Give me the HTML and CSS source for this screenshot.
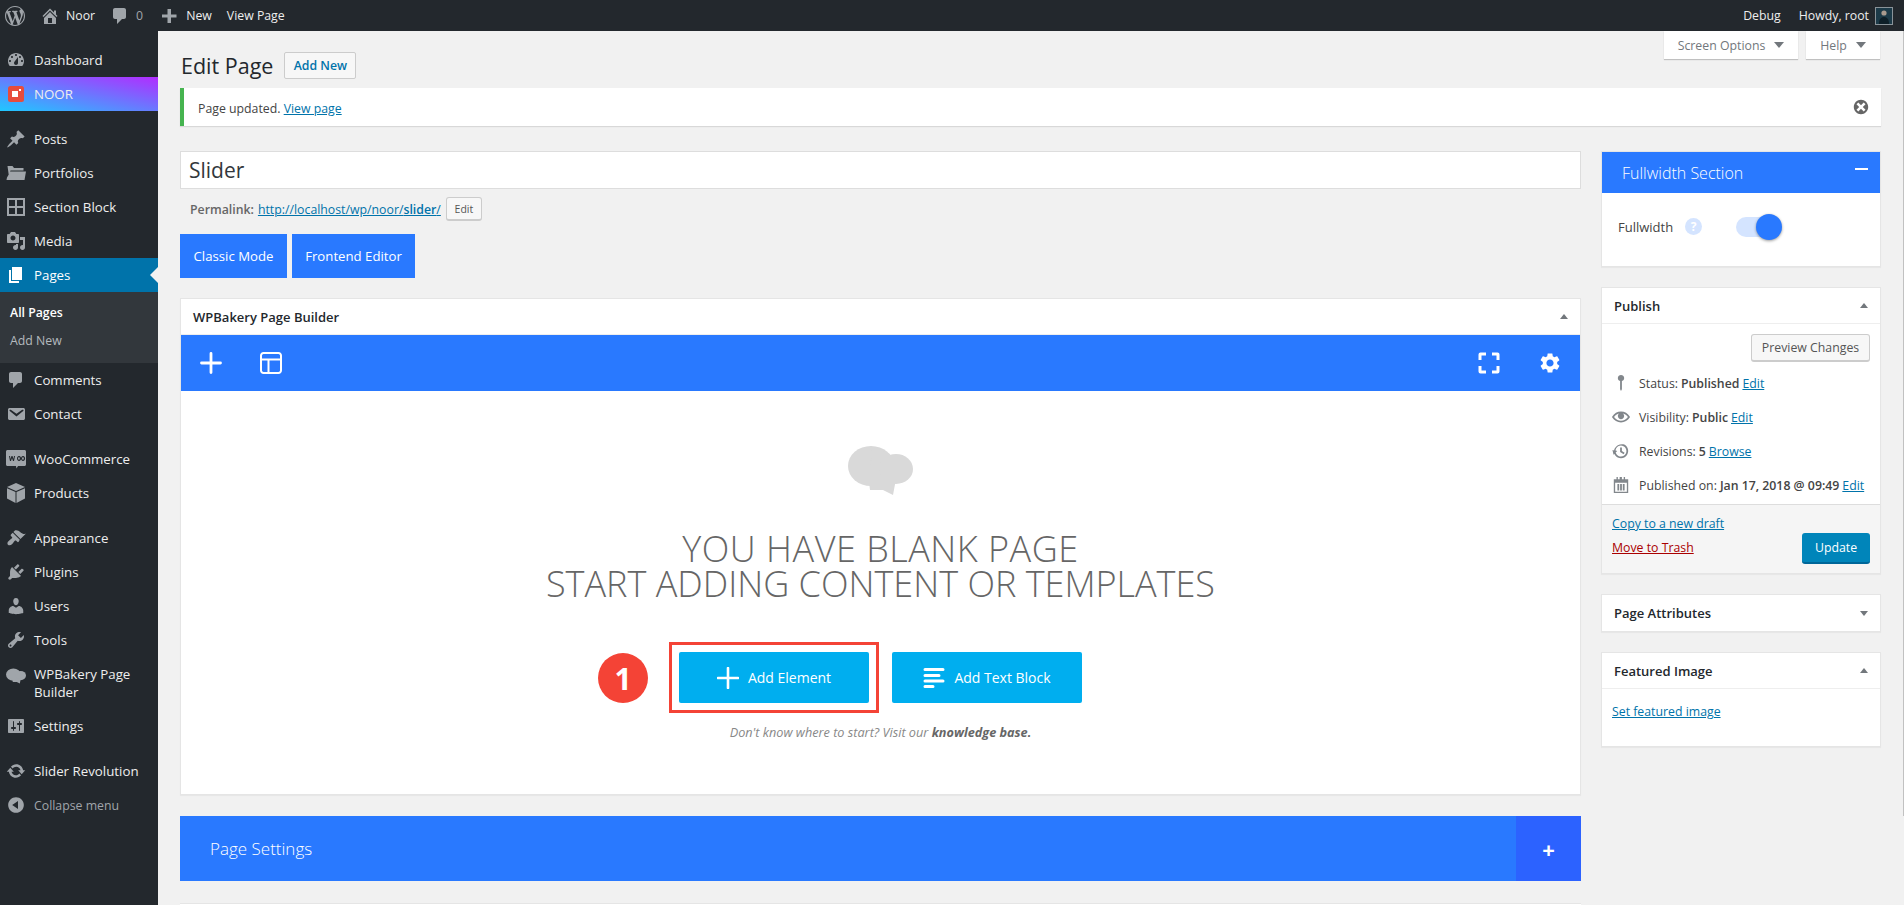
FILE: index.html
```html
<!DOCTYPE html>
<html lang="en">
<head>
  <meta charset="UTF-8">
  <title>Edit Page</title>
  <link rel="stylesheet" href="styles.css">
</head>
<body>

  <div class="adminbar">
    <div class="bar-group">
      <svg class="bar-logo" viewBox="0 0 20 20"><path d="M20 10c0-5.51-4.49-10-10-10C4.48 0 0 4.49 0 10c0 5.52 4.48 10 10 10 5.51 0 10-4.48 10-10zM7.78 15.37L4.37 6.22c.55-.02 1.17-.08 1.17-.08.5-.06.44-1.13-.06-1.11 0 0-1.45.11-2.37.11-.18 0-.37 0-.58-.01C4.12 2.69 6.87 1.11 10 1.11c2.33 0 4.45.87 6.05 2.34-.68-.11-1.65.39-1.65 1.58 0 .74.45 1.36.9 2.1.35.61.55 1.36.55 2.46 0 1.49-1.4 5-1.4 5l-3.03-8.37c.54-.02.82-.17.82-.17.5-.05.44-1.25-.06-1.22 0 0-1.44.12-2.38.12-.87 0-2.33-.12-2.33-.12-.5-.03-.56 1.2-.06 1.22l.92.08 1.26 3.41zM17.41 10c.24-.64.74-1.87.43-4.25.7 1.29 1.05 2.71 1.05 4.25 0 3.29-1.73 6.24-4.4 7.78.97-2.59 1.94-5.2 2.92-7.78zM6.1 18.09C3.12 16.65 1.11 13.53 1.11 10c0-1.3.23-2.48.72-3.59C3.25 10.3 4.67 14.2 6.1 18.09zm4.03-6.63l2.58 6.98c-.86.29-1.76.45-2.71.45-.79 0-1.57-.11-2.29-.33.81-2.38 1.62-4.74 2.42-7.1z"/></svg>
      <span class="bar-item bar-home"><svg viewBox="0 0 20 20"><path d="M16 8.5l1.53 1.53-1.06 1.06L10 4.62l-6.47 6.47-1.06-1.06L10 2.5l4 4v-2h2v4zm-6-2.46l6 5.99V18H4v-5.97zM12 17v-5H8v5h4z"/></svg>Noor</span>
      <span class="bar-item bar-comments"><svg viewBox="0 0 20 20"><path d="M5 2h9c1.1 0 2 .9 2 2v7c0 1.1-.9 2-2 2h-2l-5 5v-5H5c-1.1 0-2-.9-2-2V4c0-1.1.9-2 2-2z"/></svg><span class="muted">0</span></span>
      <span class="bar-item bar-new"><svg viewBox="0 0 20 20"><path d="M12 3v5.5h5.5v3H12V17H8.500v-5.500H3v-3h5.500V3z"/></svg>New</span>
      <span class="bar-item bar-view">View Page</span>
    </div>
    <div class="bar-group">
      <span class="bar-item bar-debug">Debug</span>
      <span class="bar-item bar-howdy">Howdy, root
        <svg class="avatar" viewBox="0 0 18 18"><rect width="18" height="18" fill="#8a9399"/><rect x="1" y="1" width="16" height="16" fill="#1c3a48"/><circle cx="9" cy="6" r="2.600" fill="#a99a8e"/><path d="M4 17c0-5 2-7 5-7s5 2 5 7z" fill="#0e1f28"/></svg>
      </span>
    </div>
  </div>

  <div class="layout">
    <div class="sidebar">
      <div class="menu-item"><svg viewBox="0 0 20 20"><path d="M3.760 16h12.480c1.100-1.370 1.760-3.110 1.760-5 0-4.420-3.580-8-8-8s-8 3.580-8 8c0 1.890.66 3.630 1.760 5zM10 4c.55 0 1 .45 1 1s-.45 1-1 1-1-.45-1-1 .45-1 1-1zM6 6c.55 0 1 .45 1 1s-.45 1-1 1-1-.45-1-1 .45-1 1-1zm8 0c.55 0 1 .45 1 1s-.45 1-1 1-1-.45-1-1 .45-1 1-1zm-5.370 5.550L12 7v6c0 1.100-.9 2-2 2s-2-.9-2-2c0-.57.24-1.080.63-1.450zM4 10c.55 0 1 .45 1 1s-.45 1-1 1-1-.45-1-1 .45-1 1-1zm12 0c.55 0 1 .45 1 1s-.45 1-1 1-1-.45-1-1 .45-1 1-1z"/></svg>Dashboard</div>
      <div class="menu-item menu-noor"><svg viewBox="0 0 20 20"><rect x="2" y="2" width="16" height="16" rx="2.500" fill="#e74c3c"/><path d="M6 7h6v6H6z" fill="#fff"/><path d="M13 5h2v2h-2z" fill="#fff"/></svg>NOOR</div>

      <div class="menu-item menu-gap"><svg viewBox="0 0 20 20"><path d="M10.440 3.020l1.820-1.820 6.360 6.350-1.830 1.820c-1.050-.68-2.480-.57-3.410.36l-.75.75c-.92.93-1.040 2.350-.35 3.410l-1.830 1.820-2.410-2.410-2.800 2.790c-.42.42-3.380 2.710-3.800 2.290s1.860-3.390 2.280-3.810l2.790-2.790L4.100 9.360l1.830-1.820c1.050.69 2.480.57 3.400-.36l.75-.75c.93-.92 1.050-2.350.36-3.410z"/></svg>Posts</div>
      <div class="menu-item"><svg viewBox="0 0 20 20"><path d="M1.500 3h5L8 5h9.500v2.500H4.500L3 14zM4.500 8.500H20L18.500 17H.5L1 14.500z"/></svg>Portfolios</div>
      <div class="menu-item"><svg viewBox="0 0 20 20"><path fill-rule="evenodd" d="M1 1h18v18H1zM3 3v6h6V3zM11 3v6h6V3zM3 11v6h6v-6zM11 11v6h6v-6z"/></svg>Section Block</div>
      <div class="menu-item"><svg viewBox="0 0 20 20"><path d="M13 11V4c0-.55-.45-1-1-1h-1.670L9 1H5L3.670 3H2c-.55 0-1 .45-1 1v7c0 .55.45 1 1 1h10c.55 0 1-.45 1-1zM7 4.500c1.380 0 2.500 1.120 2.500 2.500S8.380 9.500 7 9.500 4.500 8.380 4.500 7 5.620 4.500 7 4.500zM14 6h5v10.500c0 1.380-1.120 2.500-2.500 2.500S14 17.880 14 16.500s1.120-2.500 2.500-2.500c.17 0 .34.02.5.05V9h-3V6zm-4 8.050V13h2v3.500c0 1.380-1.120 2.500-2.500 2.500S7 17.880 7 16.500 8.120 14 9.500 14c.17 0 .34.02.5.05z"/></svg>Media</div>
      <div class="menu-item menu-current"><svg viewBox="0 0 20 20"><path d="M6 15V2h10v13H6zm-1 1h8v2H3V5h2v11z"/></svg>Pages</div>
      <div class="submenu">
        <div class="submenu-item submenu-current">All Pages</div>
        <div class="submenu-item">Add New</div>
      </div>
      <div class="menu-item"><svg viewBox="0 0 20 20"><path d="M5 2h9c1.100 0 2 .9 2 2v7c0 1.100-.9 2-2 2h-2l-5 5v-5H5c-1.100 0-2-.9-2-2V4c0-1.100.9-2 2-2z"/></svg>Comments</div>
      <div class="menu-item"><svg viewBox="0 0 20 20"><path d="M3.870 4h13.250C18.370 4 19 4.590 19 5.790v8.420c0 1.190-.63 1.790-1.880 1.790H3.870c-1.250 0-1.880-.6-1.880-1.790V5.790c0-1.200.63-1.790 1.880-1.790zm6.620 8.600l6.740-5.530c.24-.2.43-.66.13-1.070-.29-.41-.82-.42-1.170-.17l-5.700 3.860L4.800 5.830c-.35-.25-.88-.24-1.170.17-.3.41-.11.87.13 1.070z"/></svg>Contact</div>

      <div class="menu-item menu-gap"><svg viewBox="0 0 20 20"><path fill-rule="evenodd" d="M1.500 1h17c.8 0 1.500.7 1.500 1.500v13c0 .8-.7 1.500-1.500 1.500H12l-1.500 2.500L10 17H1.500C.7 17 0 16.300 0 15.500v-13C0 1.700.7 1 1.500 1zM3 7l1 5h1l1-3 1 3h1l1-5H8l-.5 3-1-3h-1l-1 3L4 7zM13 7a2 2.500 0 1 0 .1 0zM13 8.200a.8 1.300 0 1 1-.1 0zM17 7a2 2.500 0 1 0 .1 0zM17 8.200a.8 1.300 0 1 1-.1 0z"/></svg>WooCommerce</div>
      <div class="menu-item"><svg viewBox="0 0 20 20"><path d="M10 0l9 4-9 4-9-4zM1 5.200l8.500 3.800V20L1 15.500zM19 5.200L10.500 9v11l8.500-4.500z"/></svg>Products</div>

      <div class="menu-item menu-gap"><svg viewBox="0 0 20 20"><path d="M14.480 11.060L7.410 3.990l1.500-1.500c.5-.56 2.300-.47 3.510.32 1.210.8 1.430 1.280 2.910 2.100 1.180.64 2.450 1.260 4.450.85zm-.71.71L6.700 4.700 4.930 6.470c-.39.39-.39 1.020 0 1.410l1.060 1.060c.39.39.39 1.030 0 1.420-.6.6-1.430 1.110-2.210 1.690-.35.26-.7.53-1.010.84C1.430 13.710.96 15.650 1.980 16.680c.99 1.030 2.950.64 4.240-.67.3-.3.58-.63.85-.98.59-.79 1.110-1.630 1.720-2.220.39-.39 1.030-.39 1.420 0l1.060 1.060c.39.39 1.020.39 1.410 0z"/></svg>Appearance</div>
      <div class="menu-item"><svg viewBox="0 0 20 20"><path d="M13.110 4.360L9.870 7.600 8 5.730l3.240-3.240c.35-.34 1.050-.2 1.560.32.52.51.66 1.210.31 1.550zm-8 1.770l.91-1.120 9.010 9.010-1.190.84c-.71.71-2.630 1.160-3.820 1.160H6.140L4.900 17.260c-.59.59-1.540.59-2.120 0-.59-.58-.59-1.530 0-2.120l1.240-1.240v-3.880c0-1.130.4-3.190 1.090-3.890zm7.260 3.970l3.240-3.240c.34-.35 1.040-.21 1.550.31.52.51.66 1.210.31 1.550l-3.240 3.250z"/></svg>Plugins</div>
      <div class="menu-item"><svg viewBox="0 0 20 20"><path d="M10 9.250c-2.270 0-2.730-3.440-2.730-3.440C7 4.020 7.820 2 9.970 2c2.160 0 2.980 2.020 2.710 3.810 0 0-.41 3.440-2.680 3.440zm0 2.570L12.720 10c2.390 0 4.520 2.330 4.520 4.530v2.490s-3.650 1.130-7.240 1.130c-3.650 0-7.240-1.130-7.240-1.130v-2.490c0-2.250 1.940-4.480 4.470-4.480z"/></svg>Users</div>
      <div class="menu-item"><svg viewBox="0 0 20 20"><path d="M16.680 9.770c-1.340 1.340-3.300 1.670-4.950.99l-5.410 6.520c-.99.99-2.590.99-3.580 0s-.99-2.590 0-3.570l6.520-5.420c-.68-1.650-.35-3.610.99-4.950 1.280-1.280 3.120-1.620 4.720-1.060l-2.890 2.890 2.820 2.820 2.860-2.870c.53 1.580.18 3.390-1.080 4.650zM3.810 16.210c.4.39 1.040.39 1.430 0 .4-.4.4-1.040 0-1.430-.39-.4-1.030-.4-1.430 0-.39.39-.39 1.030 0 1.430z"/></svg>Tools</div>
      <div class="menu-item menu-tall"><svg viewBox="0 0 65 49"><ellipse cx="24" cy="20" rx="24" ry="20"/><ellipse cx="48" cy="23" rx="17" ry="15"/><path d="M21 36l27-3-3 16-10-5-13 0z"/></svg><span>WPBakery Page Builder</span></div>
      <div class="menu-item"><svg viewBox="0 0 20 20"><path d="M18 16V4c0-.55-.45-1-1-1H3c-.55 0-1 .45-1 1v12c0 .55.45 1 1 1h14c.55 0 1-.45 1-1zM8 11h1c.55 0 1 .45 1 1s-.45 1-1 1H8v1.500c0 .28-.22.5-.5.5s-.5-.22-.5-.5V13H6c-.55 0-1-.45-1-1s.45-1 1-1h1V5.500c0-.28.22-.5.5-.5s.5.22.5.5V11zm5-2h-1c-.55 0-1-.45-1-1s.45-1 1-1h1V5.500c0-.28.22-.5.5-.5s.5.22.5.5V7h1c.55 0 1 .45 1 1s-.45 1-1 1h-1v5.500c0 .28-.22.5-.5.5s-.5-.22-.5-.5V9z"/></svg>Settings</div>

      <div class="menu-item menu-gap"><svg viewBox="0 0 20 20"><path d="M10.200 3.280c3.530 0 6.430 2.610 6.920 6h2.080l-3.500 4-3.500-4h2.320c-.45-1.970-2.210-3.450-4.320-3.450-1.450 0-2.730.71-3.540 1.780L4.950 5.660C6.230 4.200 8.110 3.280 10.200 3.280zm-.4 13.440c-3.520 0-6.430-2.610-6.920-6H.8l3.500-4c1.170 1.330 2.330 2.670 3.500 4H5.480c.45 1.970 2.210 3.450 4.320 3.450 1.450 0 2.730-.71 3.540-1.780l1.710 1.950c-1.280 1.460-3.150 2.380-5.250 2.380z"/></svg>Slider Revolution</div>
      <div class="menu-item menu-collapse"><svg viewBox="0 0 20 20"><path d="M10 2.160c4.330 0 7.840 3.510 7.840 7.840s-3.510 7.840-7.840 7.840S2.160 14.330 2.160 10 5.710 2.160 10 2.160zm2 11.720V6.120L6.180 9.970z"/></svg>Collapse menu</div>
    </div>

    <div class="main">
      <div class="screen-tabs">
        <span class="screen-tab tab-options">Screen Options<i class="tab-arrow"></i></span>
        <span class="screen-tab tab-help">Help<i class="tab-arrow"></i></span>
      </div>

      <div class="page-head">
        <h1>Edit Page</h1>
        <span class="btn-add">Add New</span>
      </div>

      <div class="notice">
        <p>Page updated. <a href="#">View page</a></p>
        <svg class="dismiss" viewBox="0 0 20 20"><path d="M10 2c4.420 0 8 3.580 8 8s-3.580 8-8 8-8-3.580-8-8 3.580-8 8-8zm5 11l-3-3 3-3-2-2-3 3-3-3-2 2 3 3-3 3 2 2 3-3 3 3z"/></svg>
      </div>

      <div class="columns">
        <div class="editor">
          <div class="title-input">Slider</div>
          <div class="permalink">
            <b>Permalink:</b> <a href="#">http://localhost/wp/noor/<b>slider</b>/</a>
            <span class="btn-edit">Edit</span>
          </div>
          <div class="mode-buttons">
            <span class="btn-mode">Classic Mode</span>
            <span class="btn-mode">Frontend Editor</span>
          </div>

          <div class="builder">
            <div class="box-head">
              <span>WPBakery Page Builder</span>
              <i class="arrow-up"></i>
            </div>
            <div class="toolbar">
              <div class="toolbar-group">
                <svg viewBox="0 0 22 22"><path d="M11 1.500v19M1.500 11h19" fill="none" stroke="#fff" stroke-width="2.800" stroke-linecap="round"/></svg>
                <svg viewBox="0 0 22 22" class="tool-layout"><path d="M3.500 1h15A2.500 2.500 0 0 1 21 3.500v15a2.500 2.500 0 0 1-2.500 2.500h-15A2.500 2.500 0 0 1 1 18.500v-15A2.500 2.500 0 0 1 3.500 1zM1 7.500h20M8.500 7.500V21" fill="none" stroke="#fff" stroke-width="2"/></svg>
              </div>
              <div class="toolbar-group">
                <svg viewBox="0 0 22 22"><path d="M2 8V2.500Q2 2 2.500 2H8M14 2h5.500q.5 0 .5.5V8M20 14v5.500q0 .5-.5.5H14M8 20H2.500Q2 20 2 19.500V14" fill="none" stroke="#fff" stroke-width="3"/></svg>
                <svg class="tool-gear" viewBox="0 0 24 24"><path fill="#fff" d="M19.140 12.940c.04-.3.06-.61.06-.94 0-.32-.02-.64-.07-.94l2.030-1.580c.18-.14.23-.41.12-.61l-1.920-3.320c-.12-.22-.37-.29-.59-.22l-2.390.96c-.5-.38-1.030-.7-1.620-.94l-.36-2.540c-.04-.24-.24-.41-.48-.41h-3.840c-.24 0-.43.17-.47.41l-.36 2.540c-.59.24-1.130.57-1.620.94l-2.390-.96c-.22-.08-.47 0-.59.22L2.740 8.870c-.12.21-.08.47.12.61l2.030 1.580c-.05.3-.09.63-.09.94s.02.64.07.94l-2.030 1.580c-.18.14-.23.41-.12.61l1.920 3.320c.12.22.37.29.59.22l2.390-.96c.5.38 1.030.7 1.620.94l.36 2.540c.05.24.24.41.48.41h3.840c.24 0 .44-.17.47-.41l.36-2.540c.59-.24 1.130-.56 1.620-.94l2.390.96c.22.08.47 0 .59-.22l1.920-3.320c.12-.22.07-.47-.12-.61l-2.010-1.580zM12 15.600c-1.980 0-3.600-1.620-3.600-3.600s1.620-3.600 3.600-3.600 3.600 1.620 3.600 3.600-1.620 3.600-3.600 3.600z"/></svg>
              </div>
            </div>
            <div class="blank">
              <svg class="blank-logo" viewBox="0 0 65 49"><ellipse cx="23" cy="20" rx="23" ry="20"/><path d="M24 1l18 7-6 20-14 0z"/><ellipse cx="48" cy="23" rx="17" ry="15"/><path d="M21 36l27-3-3 16-10-5-13 0z"/></svg>
              <h2><span class="blank-line">YOU HAVE BLANK PAGE</span><br>START ADDING CONTENT OR TEMPLATES</h2>
              <div class="blank-buttons">
                <span class="btn-blank btn-marked">
                  <span class="step-badge">1</span>
                  <svg viewBox="0 0 22 22"><path d="M11 1v20M1 11h20" fill="none" stroke="#fff" stroke-width="2.600" stroke-linecap="round"/></svg>
                  Add Element
                </span>
                <span class="btn-blank">
                  <svg viewBox="0 0 22 22"><path d="M2 2.500h18M2 8.500h14M2 14h18M2 19.500h8" fill="none" stroke="#fff" stroke-width="3" stroke-linecap="round"/></svg>
                  Add Text Block
                </span>
              </div>
              <p class="blank-help">Don't know where to start? Visit our <b>knowledge base.</b></p>
            </div>
          </div>

          <div class="page-settings">
            <span class="page-settings-title">Page Settings</span>
            <span class="page-settings-plus">+</span>
          </div>
          <div class="next-box"></div>
        </div>

        <div class="side">
          <div class="panel">
            <div class="panel-blue">
              <span>Fullwidth Section</span>
              <i class="panel-minus"></i>
            </div>
            <div class="fullwidth-row">
              <span class="fullwidth-label">Fullwidth</span>
              <span class="help-dot">?</span>
              <span class="toggle"><i class="toggle-knob"></i></span>
            </div>
          </div>

          <div class="panel">
            <div class="box-head">
              <span>Publish</span>
              <i class="arrow-up"></i>
            </div>
            <div class="publish-body">
              <div class="preview-row"><span class="btn-preview">Preview Changes</span></div>
              <div class="pub-row"><svg viewBox="0 0 20 20"><path d="M10 1a3.500 3.500 0 0 1 1 6.850V17l-1 2-1-2V7.850A3.500 3.500 0 0 1 10 1z"/></svg>Status: <b>Published</b> <a href="#">Edit</a></div>
              <div class="pub-row"><svg viewBox="0 0 20 20"><path d="M19.700 9.400C17.700 6 14 3.900 10 3.900S2.300 6 .3 9.400L0 10l.3.6c2 3.400 5.700 5.500 9.700 5.500s7.700-2.100 9.700-5.500l.3-.6-.3-.6zM10 14.100c-3.100 0-6-1.600-7.700-4.100C3.600 8 5.700 6.600 8 6.100c-.9.6-1.500 1.700-1.500 2.900 0 1.900 1.600 3.500 3.500 3.500s3.500-1.600 3.500-3.500c0-1.200-.6-2.300-1.500-2.900 2.300.5 4.400 1.900 5.700 3.900-1.700 2.500-4.600 4.100-7.700 4.100z"/></svg>Visibility: <b>Public</b> <a href="#">Edit</a></div>
              <div class="pub-row"><svg viewBox="0 0 20 20"><path d="M13.650 2.880c3.930 2.010 5.480 6.840 3.470 10.770s-6.830 5.480-10.770 3.470c-1.870-.96-3.200-2.560-3.860-4.400l1.640-1.030c.45 1.570 1.520 2.950 3.070 3.740 2.990 1.540 6.650.35 8.180-2.640 1.540-2.990.35-6.650-2.640-8.180-3-1.540-6.650-.35-8.190 2.640-.35.7-.56 1.430-.63 2.160l1.870.64-4.110 3.990L.5 8.970l1.800.59c.09-.76.31-1.500.68-2.220C4.990 3.410 9.730 1.860 13.650 2.880zM9 6h2v4l3 2-1 1.500-4-2.500z"/></svg>Revisions: <b class="pub-count">5</b> <a href="#">Browse</a></div>
              <div class="pub-row"><svg viewBox="0 0 20 20"><path fill-rule="evenodd" d="M5 1h1.500v2.500h2V1H11v2.500h2V1h1.500v2.500H18V19H2V3.500h3zM3.500 7.500V17.500h13V7.500zM6 9h2v7H6zM9 9h2v7H9zM12 9h2v7h-2z"/></svg>Published on: <b>Jan 17, 2018 @ 09:49</b> <a href="#">Edit</a></div>
            </div>
            <div class="publish-foot">
              <div class="publish-links">
                <a href="#">Copy to a new draft</a>
                <a href="#" class="trash">Move to Trash</a>
              </div>
              <span class="btn-update">Update</span>
            </div>
          </div>

          <div class="panel">
            <div class="box-head box-head-closed">
              <span>Page Attributes</span>
              <i class="arrow-down"></i>
            </div>
          </div>

          <div class="panel">
            <div class="box-head">
              <span>Featured Image</span>
              <i class="arrow-up"></i>
            </div>
            <div class="featured-body"><a href="#">Set featured image</a></div>
          </div>
        </div>
      </div>
    </div>
  </div>

  <div class="scroll-thumb"></div>

</body>
</html>
```

FILE: styles.css
```css
* {
  box-sizing: border-box;
}

html, body {
  height: 905px;
  overflow: hidden;
}

body {
  margin: 0;
  position: relative;
  background: #f1f1f1;
  color: #444;
  font-family: "Open Sans", "Noto Sans", sans-serif;
  font-size: 12.300px;
}

a {
  color: #0073aa;
}

h1, h2, p {
  margin: 0;
  font-weight: 400;
}

/* admin bar */
.adminbar {
  height: 31px;
  background: #23282d;
  color: #eee;
  display: flex;
  justify-content: space-between;
  align-items: center;
  padding: 0 11px 0 5px;
}

.bar-group,
.bar-item {
  display: flex;
  align-items: center;
}

.adminbar svg {
  fill: #a0a5aa;
}

.bar-logo {
  width: 20px;
  height: 20px;
  margin-right: 17px;
}

.bar-item svg {
  width: 20px;
  height: 20px;
}

.bar-home svg {
  margin-right: 6px;
  margin-left: -2px;
}

.bar-comments {
  margin-left: 15px;
}

.bar-comments svg {
  margin-right: 6px;
}

.muted {
  color: #a0a5aa;
}

.bar-new {
  margin-left: 16px;
}

.bar-new svg {
  margin-right: 7px;
}

.bar-view {
  margin-left: 15px;
}

.bar-debug {
  margin-right: 18px;
}

.bar-howdy .avatar {
  width: 18px;
  height: 18px;
  margin-left: 6px;
}

/* sidebar */
.layout {
  display: flex;
  height: 874px;
}

.sidebar {
  width: 158px;
  flex: none;
  background: #23282d;
  padding-top: 12px;
  color: #eee;
  font-size: 13.300px;
}

.menu-item {
  height: 34px;
  display: flex;
  align-items: center;
  padding-left: 6px;
  position: relative;
}

.menu-item svg {
  width: 20px;
  height: 20px;
  margin-right: 8px;
  fill: #a0a5aa;
  flex: none;
}

.menu-gap {
  margin-top: 11px;
}

.menu-noor {
  background: linear-gradient(to top right, #1fc8ff, #b22cff);
}

.menu-current {
  background: #0073aa;
  color: #fff;
}

.menu-current svg {
  fill: #fff;
}

.menu-current::after {
  content: "";
  position: absolute;
  right: 0;
  top: 9px;
  border: 8px solid transparent;
  border-right-color: #f1f1f1;
  border-left-width: 0;
}

.submenu {
  background: #32373c;
  padding: 7px 0 8px;
}

.submenu-item {
  height: 28px;
  line-height: 28px;
  padding-left: 10px;
  color: #b4b9be;
  font-size: 12.300px;
}

.submenu-current {
  color: #fff;
  font-weight: 600;
}

.menu-tall {
  height: 52px;
  line-height: 18px;
}

.menu-tall svg {
  align-self: flex-start;
  margin-top: 9px;
}

.menu-collapse {
  color: #a0a5aa;
  font-size: 12.300px;
}

/* main */
.main {
  flex: 1;
  padding: 0 23px 0 22px;
  min-width: 0;
}

.screen-tabs {
  height: 0;
  display: flex;
  justify-content: flex-end;
  gap: 8px;
  padding-right: 1px;
}

.screen-tab {
  height: 28px;
  background: #fff;
  box-shadow: 0 1px 1px rgba(0, 0, 0, .2);
  color: #72777c;
  display: flex;
  align-items: center;
  justify-content: center;
}

.tab-options {
  width: 134px;
}

.tab-help {
  width: 74px;
}

.tab-arrow {
  margin-left: 9px;
  border: 5px solid transparent;
  border-top: 6px solid #72777c;
  border-bottom-width: 0;
}

.page-head {
  display: flex;
  align-items: center;
  padding-top: 21px;
  height: 48px;
}

.page-head h1 {
  font-size: 21.500px;
  color: #23282d;
  margin-right: 11px;
  margin-left: 1px;
}

.btn-add {
  height: 27px;
  width: 72px;
  border: 1px solid #ccc;
  border-radius: 2px;
  background: #f7f7f7;
  color: #0073aa;
  font-weight: 600;
  display: flex;
  align-items: center;
  justify-content: center;
}

.notice {
  margin-top: 9px;
  height: 38px;
  background: #fff;
  border-left: 4px solid #46b450;
  box-shadow: 0 1px 1px rgba(0, 0, 0, .1);
  display: flex;
  justify-content: space-between;
  align-items: center;
  padding: 2px 11px 0 14px;
}

.dismiss {
  width: 18px;
  height: 18px;
  fill: #666;
  margin-top: -2px;
}

.columns {
  display: flex;
  gap: 20px;
  margin-top: 25px;
}

.editor {
  width: 1401px;
  flex: none;
}

.side {
  width: 280px;
  flex: none;
}

.title-input {
  height: 38px;
  background: #fff;
  border: 1px solid #ddd;
  padding-left: 8px;
  font-size: 21px;
  line-height: 36px;
  color: #32373c;
}

.permalink {
  height: 24px;
  margin-top: 8px;
  padding-left: 10px;
  display: flex;
  align-items: center;
  gap: 4px;
  color: #666;
}

.permalink b {
  font-weight: 600;
}

.btn-edit {
  margin-left: 1px;
  width: 36px;
  height: 24px;
  border: 1px solid #ccc;
  border-bottom-width: 2px;
  border-radius: 3px;
  background: #f7f7f7;
  font-size: 10.500px;
  color: #555;
  display: flex;
  align-items: center;
  justify-content: center;
}

.mode-buttons {
  display: flex;
  gap: 5px;
  margin-top: 13px;
}

.btn-mode {
  height: 44px;
  background: #2979ff;
  color: #fff;
  font-size: 13.200px;
  display: flex;
  align-items: center;
  justify-content: center;
}

.btn-mode:first-child {
  width: 107px;
}

.btn-mode:last-child {
  width: 123px;
}

.builder {
  margin-top: 20px;
  height: 497px;
  background: #fff;
  border: 1px solid #e5e5e5;
  box-shadow: 0 1px 1px rgba(0, 0, 0, .04);
  display: flex;
  flex-direction: column;
}

.box-head {
  height: 36px;
  flex: none;
  border-bottom: 1px solid #eee;
  padding: 0 12px;
  display: flex;
  justify-content: space-between;
  align-items: center;
  font-weight: 600;
  font-size: 13px;
  color: #23282d;
}

.box-head-closed {
  border-bottom: 0;
}

.arrow-up,
.arrow-down {
  border: 4px solid transparent;
}

.arrow-up {
  border-bottom: 5px solid #72777c;
  border-top-width: 0;
}

.arrow-down {
  border-top: 5px solid #72777c;
  border-bottom-width: 0;
}

.toolbar {
  height: 56px;
  flex: none;
  background: #2979ff;
  display: flex;
  justify-content: space-between;
  align-items: center;
  padding: 0 18px 0 19px;
}

.toolbar-group {
  display: flex;
  align-items: center;
  gap: 38px;
}

.toolbar svg {
  width: 22px;
  height: 22px;
  display: block;
}

.toolbar .tool-gear {
  width: 24px;
  height: 24px;
}

.blank {
  flex: 1;
  text-align: center;
  padding-top: 55px;
  display: flex;
  flex-direction: column;
  align-items: center;
}

.blank-logo {
  width: 65px;
  height: 49px;
  fill: #d9d9d9;
}

.blank h2 {
  margin-top: 36px;
  font-size: 36px;
  line-height: 35px;
  font-weight: 300;
  color: #666;
}

.blank-line {
  letter-spacing: .5px;
}

.blank-buttons {
  display: flex;
  gap: 23px;
  margin-top: 51px;
}

.btn-blank {
  width: 190px;
  height: 51px;
  background: #00aeef;
  border-radius: 2px;
  color: #fff;
  font-size: 14px;
  display: flex;
  align-items: center;
  justify-content: center;
  gap: 9px;
  position: relative;
}

.btn-blank svg {
  width: 22px;
  height: 22px;
}

.btn-marked::before {
  content: "";
  position: absolute;
  inset: -10px;
  border: 3px solid #f44336;
}

.step-badge {
  position: absolute;
  left: -81px;
  top: 1px;
  width: 50px;
  height: 50px;
  border-radius: 50%;
  background: #f44336;
  font-size: 30px;
  font-weight: 700;
  display: flex;
  align-items: center;
  justify-content: center;
}

.blank-help {
  margin-top: 19px;
  line-height: 20px;
  font-size: 12.700px;
  font-style: italic;
  color: #888;
}

.blank-help b {
  color: #666;
}

.page-settings {
  margin-top: 21px;
  height: 65px;
  background: #2979ff;
  color: #fff;
  display: flex;
  justify-content: space-between;
  align-items: center;
}

.page-settings-title {
  margin-left: 30px;
  font-size: 17px;
  font-weight: 300;
}

.page-settings-plus {
  width: 65px;
  height: 65px;
  background: #2c62ff;
  display: flex;
  align-items: center;
  justify-content: center;
  font-size: 22px;
  font-weight: 700;
}

.next-box {
  margin-top: 22px;
  height: 2px;
  background: #fff;
  border-top: 1px solid #e5e5e5;
}

/* right column */
.panel {
  background: #fff;
  border: 1px solid #e5e5e5;
  box-shadow: 0 1px 1px rgba(0, 0, 0, .04);
  margin-bottom: 20px;
}

.panel-blue {
  height: 41px;
  background: #2979ff;
  color: #fff;
  display: flex;
  justify-content: space-between;
  align-items: center;
  padding: 0 12px 0 20px;
  font-size: 16px;
  font-weight: 300;
}

.panel-minus {
  width: 13px;
  height: 2px;
  background: #fff;
  margin-bottom: 8px;
}

.fullwidth-row {
  height: 73px;
  padding: 0 0 6px 16px;
  display: flex;
  align-items: center;
}

.fullwidth-label {
  width: 67px;
  font-size: 13px;
}

.help-dot {
  width: 17px;
  height: 17px;
  border-radius: 50%;
  background: #d4e4ff;
  color: #fff;
  font-size: 12px;
  font-weight: 700;
  display: flex;
  align-items: center;
  justify-content: center;
}

.toggle {
  margin-left: 34px;
  width: 40px;
  height: 20px;
  border-radius: 10px;
  background: #d4e4ff;
  position: relative;
}

.toggle-knob {
  position: absolute;
  right: -6px;
  top: -3px;
  width: 26px;
  height: 26px;
  border-radius: 50%;
  background: #2979ff;
  box-shadow: 0 1px 3px rgba(0, 0, 0, .4);
}

.publish-body {
  padding: 10px 10px 2px;
}

.preview-row {
  display: flex;
  justify-content: flex-end;
}

.btn-preview {
  width: 119px;
  height: 28px;
  border: 1px solid #ccc;
  border-bottom-width: 2px;
  border-radius: 3px;
  background: #f7f7f7;
  color: #555;
  display: flex;
  align-items: center;
  justify-content: center;
}

.pub-row {
  height: 34px;
  display: flex;
  align-items: center;
  gap: 3px;
  color: #444;
}

.pub-row:nth-child(2) {
  margin-top: 4px;
}

.pub-row svg {
  width: 18px;
  height: 18px;
  fill: #82878c;
  margin: 0 6px 0 0;
  flex: none;
}

.pub-row b {
  font-weight: 600;
}

.publish-foot {
  height: 69px;
  background: #f5f5f5;
  border-top: 1px solid #ddd;
  display: flex;
  justify-content: space-between;
  align-items: flex-start;
  padding: 10px 10px 0;
}

.publish-links {
  display: flex;
  flex-direction: column;
  gap: 6px;
  line-height: 18px;
  align-items: flex-start;
}

.trash {
  color: #a00;
}

.btn-update {
  margin-top: 18px;
  width: 68px;
  height: 31px;
  background: #0085ba;
  border-bottom: 2px solid #006799;
  border-radius: 3px;
  color: #fff;
  display: flex;
  align-items: center;
  justify-content: center;
}

.featured-body {
  height: 57px;
  padding: 14px 12px 0 10px;
}

.scroll-thumb {
  position: absolute;
  right: 0;
  top: 31px;
  width: 1px;
  height: 785px;
  background: #c1c1c1;
}
```
